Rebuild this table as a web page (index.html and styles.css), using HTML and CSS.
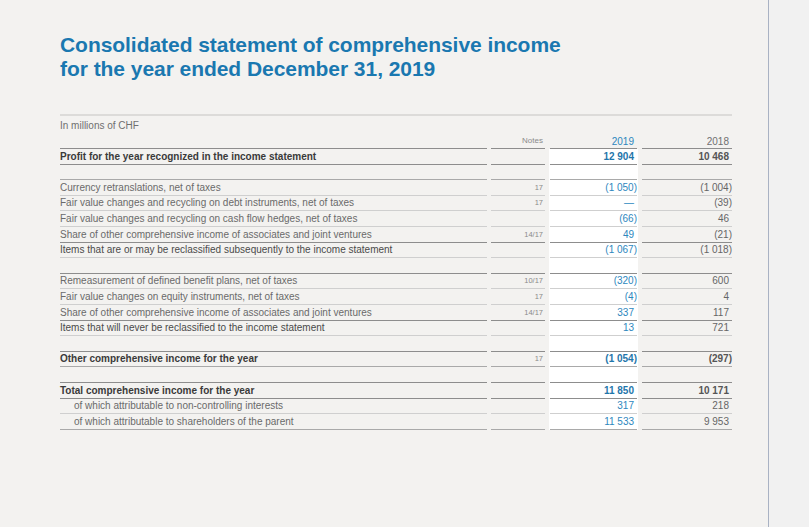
FILE: index.html
```html
<!DOCTYPE html>
<html lang="en">
<head>
<meta charset="utf-8">
<title>Consolidated statement of comprehensive income</title>
<link rel="stylesheet" href="styles.css">
</head>
<body>
<div class="page">
  <main class="doc">
    <h1 class="title">Consolidated statement of comprehensive income<br>for the year ended December 31, 2019</h1>
    <section class="statement">
      <div class="unit">In millions of CHF</div>
      <div class="row head">
        <div class="c lbl"></div>
        <div class="c note">Notes</div>
        <div class="c cur">2019</div>
        <div class="c prev">2018</div>
      </div>
      <div class="body">
        <div class="row bold dark">
          <div class="c lbl">Profit for the year recognized in the income statement</div>
          <div class="c note"></div>
          <div class="c cur">12 904</div>
          <div class="c prev">10 468</div>
        </div>
        <div class="row spacer mid">
          <div class="c lbl"></div><div class="c note"></div><div class="c cur"></div><div class="c prev"></div>
        </div>
        <div class="row light">
          <div class="c lbl">Currency retranslations, net of taxes</div>
          <div class="c note">17</div>
          <div class="c cur">(1 050<span class="p">)</span></div>
          <div class="c prev">(1 004<span class="p">)</span></div>
        </div>
        <div class="row light">
          <div class="c lbl">Fair value changes and recycling on debt instruments, net of taxes</div>
          <div class="c note">17</div>
          <div class="c cur">—</div>
          <div class="c prev">(39<span class="p">)</span></div>
        </div>
        <div class="row light">
          <div class="c lbl">Fair value changes and recycling on cash flow hedges, net of taxes</div>
          <div class="c note"></div>
          <div class="c cur">(66<span class="p">)</span></div>
          <div class="c prev">46</div>
        </div>
        <div class="row dark">
          <div class="c lbl">Share of other comprehensive income of associates and joint ventures</div>
          <div class="c note">14/17</div>
          <div class="c cur">49</div>
          <div class="c prev">(21<span class="p">)</span></div>
        </div>
        <div class="row light sub">
          <div class="c lbl">Items that are or may be reclassified subsequently to the income statement</div>
          <div class="c note"></div>
          <div class="c cur">(1 067<span class="p">)</span></div>
          <div class="c prev">(1 018<span class="p">)</span></div>
        </div>
        <div class="row spacer dark">
          <div class="c lbl"></div><div class="c note"></div><div class="c cur"></div><div class="c prev"></div>
        </div>
        <div class="row light">
          <div class="c lbl">Remeasurement of defined benefit plans, net of taxes</div>
          <div class="c note">10/17</div>
          <div class="c cur">(320<span class="p">)</span></div>
          <div class="c prev">600</div>
        </div>
        <div class="row light">
          <div class="c lbl">Fair value changes on equity instruments, net of taxes</div>
          <div class="c note">17</div>
          <div class="c cur">(4<span class="p">)</span></div>
          <div class="c prev">4</div>
        </div>
        <div class="row dark">
          <div class="c lbl">Share of other comprehensive income of associates and joint ventures</div>
          <div class="c note">14/17</div>
          <div class="c cur">337</div>
          <div class="c prev">117</div>
        </div>
        <div class="row light sub">
          <div class="c lbl">Items that will never be reclassified to the income statement</div>
          <div class="c note"></div>
          <div class="c cur">13</div>
          <div class="c prev">721</div>
        </div>
        <div class="row spacer dark">
          <div class="c lbl"></div><div class="c note"></div><div class="c cur"></div><div class="c prev"></div>
        </div>
        <div class="row bold mid">
          <div class="c lbl">Other comprehensive income for the year</div>
          <div class="c note">17</div>
          <div class="c cur">(1 054<span class="p">)</span></div>
          <div class="c prev">(297<span class="p">)</span></div>
        </div>
        <div class="row spacer dark">
          <div class="c lbl"></div><div class="c note"></div><div class="c cur"></div><div class="c prev"></div>
        </div>
        <div class="row bold dark">
          <div class="c lbl">Total comprehensive income for the year</div>
          <div class="c note"></div>
          <div class="c cur">11 850</div>
          <div class="c prev">10 171</div>
        </div>
        <div class="row light indent">
          <div class="c lbl">of which attributable to non-controlling interests</div>
          <div class="c note"></div>
          <div class="c cur">317</div>
          <div class="c prev">218</div>
        </div>
        <div class="row mid indent">
          <div class="c lbl">of which attributable to shareholders of the parent</div>
          <div class="c note"></div>
          <div class="c cur">11 533</div>
          <div class="c prev">9 953</div>
        </div>
      </div>
    </section>
  </main>
  <aside class="side"></aside>
</div>
</body>
</html>
```

FILE: styles.css
```css
* { box-sizing: border-box; }

html, body {
  margin: 0;
  padding: 0;
  height: 100%;
}

body {
  background: #f1f1f1;
  font-family: "Liberation Sans", Arial, sans-serif;
}

.page {
  display: flex;
  height: 100%;
}

.doc {
  width: 769px;
  flex: none;
  background: #f3f2f0;
  border-right: 1px solid #a9b2c3;
  padding: 33px 0 0 60px;
}

.side {
  flex: 1;
  background: #f1f1f1;
}

.title {
  margin: 0;
  font-size: 21px;
  line-height: 24px;
  font-weight: bold;
  color: #1a78b0;
  letter-spacing: -0.05px;
}

.statement {
  width: 672px;
  margin-top: 33px;
  border-top: 2px solid #dcdbd9;
}

.unit {
  font-size: 10px;
  color: #6f6f6f;
  height: 17px;
  padding-top: 4px;
}

.row {
  display: grid;
  grid-template-columns: 427px 54px 89px 90px;
  column-gap: 4px;
  height: 15.6px;
}

.c {
  display: flex;
  align-items: flex-end;
  justify-content: flex-end;
  font-size: 10px;
  line-height: 11px;
  padding-bottom: 2px;
  border-bottom: 1px solid #c9c9c9;
  color: #6a6a6a;
  white-space: nowrap;
}

.c.lbl {
  justify-content: flex-start;
  color: #6a6a6a;
}

.c.note {
  font-size: 7.5px;
  color: #8a8a8a;
  padding-right: 2px;
}

.c.cur {
  margin: 0 1px;
  color: #2d87be;
  padding-right: 3px;
}

.c.prev {
  color: #666;
  padding-right: 3px;
}

.p {
  margin-right: -3px;
}

.head {
  height: 16px;
}

.head .c {
  border-bottom-color: #8d8d8d;
  padding-bottom: 1px;
}

.head .c.note {
  font-size: 8px;
  padding-bottom: 2px;
}

.head .c.cur { color: #2d87be; }
.head .c.prev { color: #707070; }

.body {
  background: linear-gradient(to right, transparent 489px, #ffffff 489px, #ffffff 578px, transparent 578px);
}

.row.light .c { border-bottom-color: #cfcfcf; }
.row.mid .c { border-bottom-color: #a9a9a9; }
.row.dark .c { border-bottom-color: #8d8d8d; }

.row.bold .c.lbl { font-weight: bold; color: #3a3a3a; }
.row.bold .c.cur { font-weight: bold; color: #1f76ab; }
.row.bold .c.prev { font-weight: bold; color: #555; }

.row.sub .c.lbl { color: #4a4a4a; }

.row.indent .c.lbl { padding-left: 14px; }
```
